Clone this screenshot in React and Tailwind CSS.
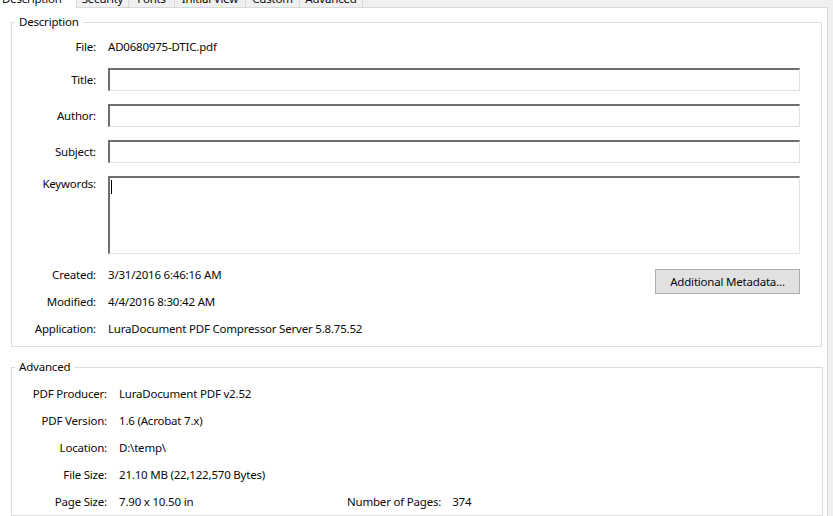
import React from "react";

const font = { fontFamily: '"Noto Sans", "Open Sans", sans-serif' };

function Tab({ label, w, selected }) {
  return (
    <div
      className={
        selected
          ? "h-[22px] pt-[5px] leading-[16px] bg-white border-r border-[#d9d9d9] shrink-0 pl-[2px]"
          : "h-[22px] pt-[5px] leading-[16px] bg-[#f0f0f0] border-r border-b border-[#d9d9d9] shrink-0 text-center"
      }
      style={{ width: w }}
    >
      {label}
    </div>
  );
}

function Input({ h = "h-[23px]", caret }) {
  return (
    <div
      className={`flex-1 ${h} bg-white border-t-2 border-l-2 border-r border-b border-t-[#6e6e6e] border-l-[#6e6e6e] border-r-[#e3e3e3] border-b-[#e3e3e3]`}
    >
      {caret && <div className="ml-[1px] mt-[2px] w-[1px] h-[14px] bg-black" />}
    </div>
  );
}

function Row({ label, children, labelW = "w-[96px]", h = "h-[16px]" }) {
  return (
    <div className={`flex items-center ${h}`}>
      <div className={`${labelW} text-right shrink-0 pr-[12px] leading-[16px]`}>{label}</div>
      <div className="leading-[16px] whitespace-nowrap">{children}</div>
    </div>
  );
}

function InputRow({ label, h, caret, labelMt = "mt-[4px]" }) {
  return (
    <div className="flex items-start mt-[13px]">
      <div className={`w-[96px] shrink-0 pr-[12px] text-right leading-[16px] ${labelMt}`}>{label}</div>
      <Input h={h} caret={caret} />
    </div>
  );
}

export default function App() {
  return (
    <div
      className="w-[833px] h-[516px] overflow-hidden bg-[#f0f0f0] text-[11.5px] tracking-[-0.2px] text-[#0a0a0a]"
      style={font}
    >
      <div className="w-[828px] h-[516px] flex flex-col">
        {/* tab strip */}
        <div className="h-[8px] flex items-end overflow-hidden shrink-0">
          <Tab label="Description" w={77} selected />
          <Tab label="Security" w={52} />
          <Tab label="Fonts" w={46} />
          <Tab label="Initial View" w={71} />
          <Tab label="Custom" w={54} />
          <Tab label="Advanced" w={63} />
          <div className="flex-1 h-full border-b border-[#d9d9d9]" />
        </div>

        {/* panel */}
        <div className="flex-1 bg-white border-r border-[#d9d9d9] pl-[11px] pr-[6px] pt-[14px] flex flex-col">
          {/* Description group */}
          <div className="relative border border-[#dcdcdc] w-[811px] h-[325px] pt-[16px] pr-[21px]">
            <span className="absolute left-[3px] top-[-9px] bg-white px-[4px] leading-[16px]">
              Description
            </span>
            <div className="flex flex-col">
              <Row label="File:">AD0680975-DTIC.pdf</Row>
              <InputRow label="Title:" />
              <InputRow label="Author:" />
              <InputRow label="Subject:" />
              <InputRow label="Keywords:" h="h-[78px]" caret labelMt="mt-0" />
              <div className="flex justify-between items-start mt-[12px]">
                <div className="flex flex-col gap-[9px]">
                  <Row label="Created:" h="h-[18px]">3/31/2016 6:46:16 AM</Row>
                  <Row label="Modified:" h="h-[18px]">4/4/2016 8:30:42 AM</Row>
                  <Row label="Application:" h="h-[18px]">LuraDocument PDF Compressor Server 5.8.75.52</Row>
                </div>
                <button className="mt-[3px] w-[145px] h-[25px] bg-[#e1e1e1] border border-[#adadad] leading-[16px] text-[#0a0a0a]">
                  Additional Metadata...
                </button>
              </div>
            </div>
          </div>

          {/* Advanced group */}
          <div className="relative mt-[20px] border border-[#dcdcdc] w-[812px] flex-1 pt-[17px]">
            <span className="absolute left-[3px] top-[-9px] bg-white px-[4px] leading-[16px]">
              Advanced
            </span>
            <div className="flex flex-col gap-[9px]">
              <Row label="PDF Producer:" labelW="w-[107px]" h="h-[18px]">LuraDocument PDF v2.52</Row>
              <Row label="PDF Version:" labelW="w-[107px]" h="h-[18px]">1.6 (Acrobat 7.x)</Row>
              <Row label="Location:" labelW="w-[107px]" h="h-[18px]">D:\temp\</Row>
              <Row label="File Size:" labelW="w-[107px]" h="h-[18px]">21.10 MB (22,122,570 Bytes)</Row>
              <div className="flex items-center h-[18px]">
                <div className="w-[107px] text-right shrink-0 pr-[12px] leading-[16px]">Page Size:</div>
                <div className="w-[228px] shrink-0 leading-[16px]">7.90 x 10.50 in</div>
                <div className="leading-[16px] pr-[11px] shrink-0">Number of Pages:</div>
                <div className="leading-[16px]">374</div>
              </div>
            </div>
          </div>
        </div>
      </div>
    </div>
  );
}
